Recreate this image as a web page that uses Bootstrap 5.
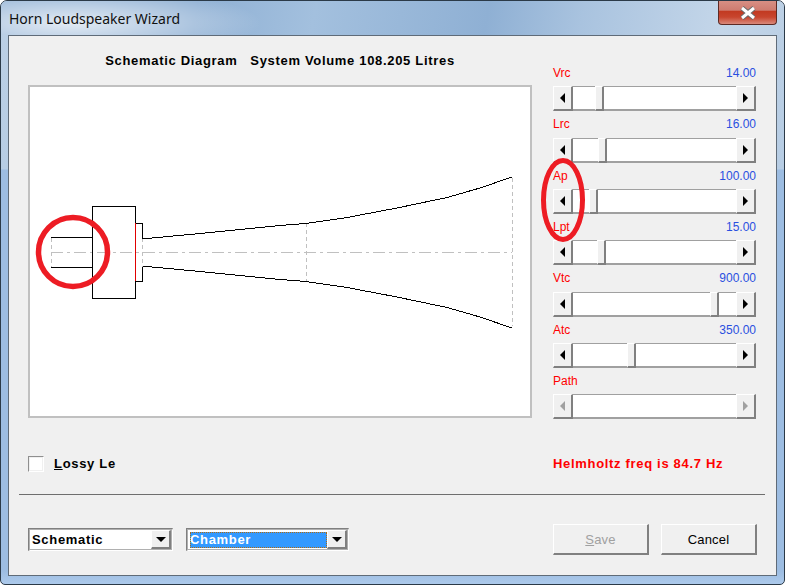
<!DOCTYPE html>
<html lang="en">

<head>
  <meta charset="UTF-8" />
  <meta name="viewport" content="width=device-width, initial-scale=1.0" />
  <title>Horn Loudspeaker Wizard</title>
  <link href="https://cdn.jsdelivr.net/npm/bootstrap@5.3.0/dist/css/bootstrap.min.css" rel="stylesheet" />
  <script src="https://cdn.jsdelivr.net/npm/bootstrap@5.3.0/dist/js/bootstrap.bundle.min.js"></script>
  <style>
    body {
      margin: 0;
      background: #fff;
      font-family: "Liberation Sans", Arial, sans-serif;
    }

    .win-frame {
      position: relative;
      width: 785px;
      height: 585px;
      border: 1px solid #2b3a48;
      border-bottom-left-radius: 5px;
      border-bottom-right-radius: 5px;
      border-top-left-radius: 7px;
      border-top-right-radius: 7px;
      background: linear-gradient(to bottom, #bcd0e5 0, #b7cde4 168px, #9dbde2 169px, #9dbde2 570px, #aecbec 584px);
      overflow: hidden;
    }

    .title-bar {
      height: 34px;
      padding-left: 8px;
      background:
        radial-gradient(ellipse 190px 36px at 70px 22px, rgba(255, 255, 255, .75), rgba(255, 255, 255, 0)),
        linear-gradient(100deg, #8fb0d4 0, #8fb0d4 25%, #a3c0de 40%, #8fb0d4 62%, #a9c3df 74%, #c4d6e9 92%, #bcd0e5 100%);
    }

    .title-text {
      font-family: "Noto Sans", sans-serif;
      font-size: 14px;
      color: #111;
      line-height: 36px;
    }

    .close-btn {
      width: 59px;
      height: 24px;
      margin-right: 7px;
      border: 1px solid #5d2a24;
      border-top: 0;
      border-radius: 0 0 4px 4px;
      background: linear-gradient(to bottom, #d88f84 0, #cf7c70 40%, #c23a22 45%, #c8452e 70%, #d9897b 100%);
    }

    .client-area {
      height: 541px;
      margin: 0 7px 0 7px;
      padding: 17px 20px 0 19px;
      background: #f0f0f0;
      border: 1px solid #5f6b78;
    }

    .main-grid {
      display: grid;
      grid-template-columns: 504px 203px;
      column-gap: 21px;
    }

    .dlg-bold {
      font-size: 13px;
      font-weight: 700;
      letter-spacing: .68px;
      line-height: 16px;
      color: #000;
    }

    .diagram-box {
      width: 504px;
      height: 333px;
      margin-top: 16px;
      border: 2px solid #c0c0c0;
      background: #fff;
    }

    .slider-col {
      padding-top: 7px;
    }

    .slider-row {
      height: 51.33px;
    }

    .slider-label {
      height: 26.33px;
      font-size: 12px;
      line-height: 26px;
    }

    .label-red {
      color: #f00;
    }

    .label-blue {
      color: #2a4fe0;
    }

    .scroll-bar {
      height: 25px;
      background: #fff;
      border-top: 1px solid #a0a0a0;
      border-bottom: 2px solid #a0a0a0;
    }

    .raised {
      flex: none;
      background: #f0f0f0;
      border-style: solid;
      border-width: 1px 2px 2px 1px;
      border-color: #fff #808080 #808080 #fff;
    }

    .scroll-arrow {
      width: 20px;
      height: 25px;
      margin: -1px 0 -2px;
    }

    .arrow-shape {
      width: 0;
      height: 0;
      border-top: 5px solid transparent;
      border-bottom: 5px solid transparent;
    }

    .arrow-left {
      border-right: 5px solid #000;
    }

    .arrow-right {
      border-left: 5px solid #000;
    }

    .is-off .arrow-left {
      border-right-color: #a0a0a0;
    }

    .is-off .arrow-right {
      border-left-color: #a0a0a0;
    }

    .scroll-thumb {
      width: 9px;
      height: 25px;
      margin-top: -1px;
    }

    .oval-mark {
      position: absolute;
      left: 535px;
      top: 153px;
    }

    .lossy-row {
      margin-top: 37px;
      height: 16px;
    }

    .form-check-input.lossy-box {
      width: 16px;
      height: 16px;
      margin: 0 10px 0 0;
      border: 1px solid #8f8f8f;
      border-right-color: #fff;
      border-bottom-color: #fff;
      border-radius: 0;
      background: #fff;
      box-shadow: inset 0 0 0 1px #f0f0f0;
    }

    .freq-text {
      color: #f00;
    }

    .dlg-rule {
      height: 1px;
      margin: 22px -9px 0;
      border: 0;
      background: #6e6e6e;
      opacity: 1;
    }

    .footer-row {
      margin: 29px -1px 0 0;
    }

    .combo-group {
      gap: 13px;
    }

    .button-group {
      gap: 12px;
    }

    .combo-box {
      height: 23px;
      padding: 2px;
      background: #fff;
      border-style: solid;
      border-width: 2px 1px 1px 2px;
      border-color: #808080 #fff #fff #808080;
      outline: 1px solid #b0b0b0;
      outline-offset: -2px;
    }

    .combo-first {
      width: 145px;
    }

    .combo-second {
      width: 163px;
    }

    .combo-text {
      line-height: 15px;
    }

    .combo-picked {
      background: #3399ff;
      color: #fff;
      outline: 1px dotted #b06a10;
      outline-offset: -1px;
    }

    .combo-btn {
      width: 20px;
      height: 19px;
      margin: -2px -1px -2px 0;
    }

    .arrow-down {
      width: 0;
      height: 0;
      border-left: 5px solid transparent;
      border-right: 5px solid transparent;
      border-top: 5px solid #000;
    }

    .dlg-btn {
      width: 96px;
      height: 31px;
      padding: 0;
      border-radius: 0;
      font-size: 13px;
      letter-spacing: .2px;
      color: #000;
    }

    .dlg-btn:disabled {
      color: #a0a0a0;
      background: #f0f0f0;
      border-color: #fff #808080 #808080 #fff;
      opacity: 1;
    }
  </style>
</head>

<body>
  <div class="win-frame">
    <div class="title-bar d-flex justify-content-between align-items-start">
      <span class="title-text">Horn Loudspeaker Wizard</span>
      <div class="close-btn d-flex align-items-center justify-content-center">
        <svg width="18" height="14" viewBox="0 0 18 14">
          <path d="M3 2 L15 12 M15 2 L3 12" stroke="#6b6b6b" stroke-width="5" />
          <path d="M3 2 L15 12 M15 2 L3 12" stroke="#fff" stroke-width="3" />
        </svg>
      </div>
    </div>

    <div class="client-area">
      <div class="main-grid">
        <div>
          <div class="dlg-bold text-center">Schematic Diagram &nbsp; System Volume 108.205 Litres</div>
          <div class="diagram-box">
            <svg width="500" height="329" viewBox="30 87 500 329" class="d-block">
              <g fill="none" stroke="#c0c0c0" stroke-width="1" stroke-dasharray="12 4 3 4">
                <path d="M51 252.5H512" />
              </g>
              <g fill="none" stroke="#c0c0c0" stroke-width="1" stroke-dasharray="4 3">
                <path d="M51.5 238V267M92.5 238V267M142.5 238V267M306.5 223V281M512.5 178V326" />
              </g>
              <g fill="none" stroke="#000" stroke-width="1" shape-rendering="crispEdges">
                <path d="M51 237.5H92.5M51 267.5H92.5" />
                <path d="M92.5 206.5H135.5V298.5H92.5Z" />
                <path d="M135.5 223.5H142.5V238.5M135.5 281.5H142.5V266.5" />
                <path d="M142.5 238.5H147L200 233.5L280 225.5L306 223.5L347 217.5L397 208L447 197.5L480 188L512 177" />
                <path d="M142.5 266.5H147L200 271.5L280 279.5L306 281.5L347 287.5L397 297L447 307.5L480 317L512 328" />
              </g>
              <path d="M135.5 223V281" stroke="#e00000" stroke-width="1" />
              <circle cx="73" cy="252" r="34.5" fill="none" stroke="#ed1c24" stroke-width="5.5" />
            </svg>
          </div>
        </div>
        <div class="slider-col" id="sliders"></div>
      </div>

      <div class="main-grid lossy-row">
        <div class="d-flex align-items-center dlg-bold">
          <input class="form-check-input lossy-box" type="checkbox" id="lossy" />
          <label for="lossy"><u>L</u>ossy Le</label>
        </div>
        <div class="dlg-bold freq-text">Helmholtz freq is 84.7 Hz</div>
      </div>

      <hr class="dlg-rule" />

      <div class="footer-row d-flex justify-content-between align-items-center">
        <div class="d-flex combo-group dlg-bold">
          <div class="combo-box combo-first d-flex">
            <div class="combo-text flex-grow-1">Schematic</div>
            <div class="raised combo-btn d-flex align-items-center justify-content-center"><div class="arrow-down"></div></div>
          </div>
          <div class="combo-box combo-second d-flex">
            <div class="combo-text combo-picked flex-grow-1">Chamber</div>
            <div class="raised combo-btn d-flex align-items-center justify-content-center"><div class="arrow-down"></div></div>
          </div>
        </div>
        <div class="d-flex button-group">
          <button class="btn raised dlg-btn" disabled><u>S</u>ave</button>
          <button class="btn raised dlg-btn">Cancel</button>
        </div>
      </div>
    </div>

    <svg class="oval-mark" width="54" height="92" viewBox="0 0 54 92">
      <ellipse cx="27" cy="46" rx="19.5" ry="39.5" fill="none" stroke="#ed1c24" stroke-width="5" />
    </svg>
  </div>

  <script>
    // thumb = px from the left end of the 163px track, null = no thumb
    const sliders = [
      { name: "Vrc", value: "14.00", thumb: 22 },
      { name: "Lrc", value: "16.00", thumb: 25 },
      { name: "Ap", value: "100.00", thumb: 16 },
      { name: "Lpt", value: "15.00", thumb: 24 },
      { name: "Vtc", value: "900.00", thumb: 137 },
      { name: "Atc", value: "350.00", thumb: 54 },
      { name: "Path", value: "", thumb: null }
    ];

    document.getElementById("sliders").innerHTML = sliders.map((s) => {
      const off = s.thumb === null ? " is-off" : "";
      const thumb = s.thumb === null ? "" :
        `<div class="raised scroll-thumb" style="margin-left:${s.thumb}px"></div>`;
      return `<div class="slider-row${off}">
        <div class="slider-label d-flex justify-content-between">
          <span class="label-red">${s.name}</span><span class="label-blue">${s.value}</span>
        </div>
        <div class="scroll-bar d-flex">
          <div class="raised scroll-arrow d-flex align-items-center justify-content-center"><div class="arrow-shape arrow-left"></div></div>
          <div class="flex-grow-1">${thumb}</div>
          <div class="raised scroll-arrow d-flex align-items-center justify-content-center"><div class="arrow-shape arrow-right"></div></div>
        </div>
      </div>`;
    }).join("");
  </script>
</body>

</html>
